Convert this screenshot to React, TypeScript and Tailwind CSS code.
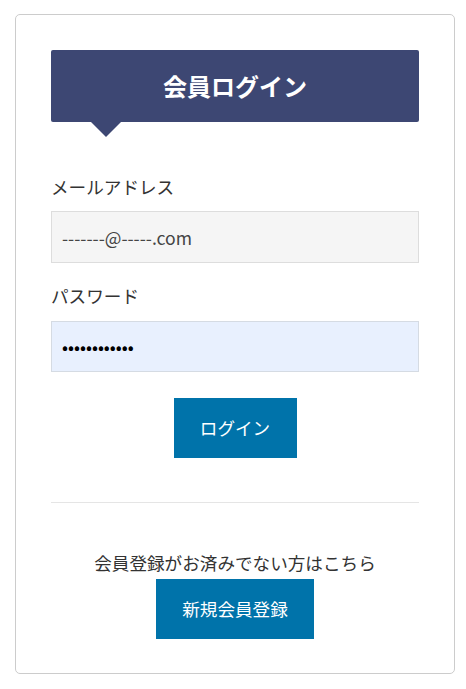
import React from "react";

const font = { fontFamily: '"Noto Sans CJK JP", "Noto Sans", sans-serif' };

export default function App() {
  return (
    <div className="min-h-[689px] bg-white pt-[14px] pl-[15px]" style={font}>
      <div className="w-[440px] h-[660px] border border-[#cccccc] rounded-[5px] px-[35px] pt-[35px] box-border">
        <div className="relative h-[72px] bg-[#3d4773] rounded-[2px] flex items-center justify-center">
          <span className="text-white text-[24px] font-bold leading-none">会員ログイン</span>
          <div className="absolute left-[39px] top-[71px] w-0 h-0 border-l-[16px] border-r-[16px] border-t-[16px] border-l-transparent border-r-transparent border-t-[#3d4773]" />
        </div>
        <div className="mt-[53px] text-[17.6px] leading-[24px] text-[#333333]">メールアドレス</div>
        <input
          type="text"
          readOnly
          value="-------@-----.com"
          className="block w-full mt-[12px] h-[52px] bg-[#f5f5f5] border border-[#dddddd] px-[10px] text-[17.6px] text-[#444444] outline-none"
          style={font}
        />
        <div className="mt-[21px] text-[17.6px] leading-[24px] text-[#333333]">パスワード</div>
        <input
          type="password"
          readOnly
          value="abcdefghijkl"
          className="block w-full mt-[13px] h-[51px] bg-[#e8f0fe] border border-[#d5dbe3] px-[10px] text-[17.6px] text-black outline-none"
          style={font}
        />
        <div className="mt-[26px] flex justify-center">
          <div className="w-[123px] h-[60px] bg-[#0073aa] text-white text-[17.6px] flex items-center justify-center">ログイン</div>
        </div>
        <div className="mt-[44px] border-t border-[#e5e5e5]" />
        <div className="mt-[48px] text-center text-[17.6px] leading-[24px] text-[#333333]">会員登録がお済みでない方はこちら</div>
        <div className="mt-[4px] flex justify-center">
          <div className="w-[158px] h-[60px] bg-[#0073aa] text-white text-[17.6px] flex items-center justify-center">新規会員登録</div>
        </div>
      </div>
    </div>
  );
}
